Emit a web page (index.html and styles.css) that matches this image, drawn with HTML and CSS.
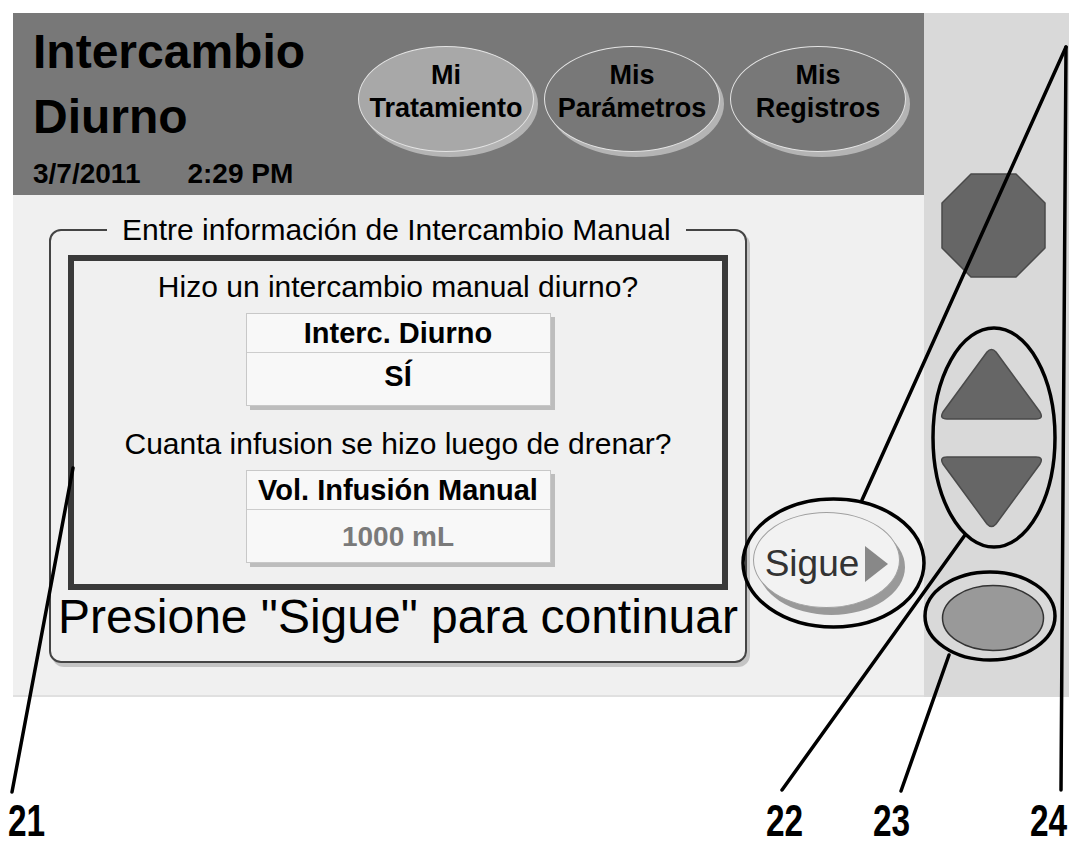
FILE: index.html
```html
<!DOCTYPE html>
<html lang="es">
<head>
    <meta charset="utf-8">
    <title>Intercambio Diurno</title>
    <link rel="stylesheet" href="styles.css">
</head>
<body>
    <div class="device">
        <div class="screen">
            <header class="topbar">
                <div class="title-block">
                    <h1 class="title">Intercambio<br>Diurno</h1>
                    <div class="clock"><span>3/7/2011</span><span>2:29 PM</span></div>
                </div>
                <nav class="tabs">
                    <div class="tab active">Mi<br>Tratamiento</div>
                    <div class="tab">Mis<br>Parámetros</div>
                    <div class="tab">Mis<br>Registros</div>
                </nav>
            </header>

            <main class="content">
                <fieldset class="entry">
                    <legend>Entre información de Intercambio Manual</legend>
                    <div class="entry-box">
                        <p class="question">Hizo un intercambio manual diurno?</p>
                        <div class="field">
                            <div class="field-label">Interc. Diurno</div>
                            <div class="field-value">SÍ</div>
                        </div>
                        <p class="question second">Cuanta infusion se hizo luego de drenar?</p>
                        <div class="field">
                            <div class="field-label">Vol. Infusión Manual</div>
                            <div class="field-value muted">1000 mL</div>
                        </div>
                    </div>
                    <p class="prompt">Presione "Sigue" para continuar</p>
                </fieldset>

                <div class="next">Sigue<span class="next-arrow"></span></div>
            </main>
        </div>

        <aside class="keys">
            <!-- stop key -->
            <svg class="key-stop" width="105" height="105" viewBox="0 0 105 105">
                <polygon points="30,1 75,1 104,30 104,75 75,104 30,104 1,75 1,30" fill="#666" stroke="#4a4a4a" stroke-width="1.5" stroke-linejoin="round"/>
            </svg>
            <div class="key-arrows">
                <svg width="107" height="75" viewBox="-2 -2 107 75">
                    <path d="M47 4 Q51.5 -1 56 4 L100 64 Q104 71 96 71 L7 71 Q-1 71 3 64 Z" fill="#666" stroke="#4a4a4a" stroke-width="1.5"/>
                </svg>
                <svg width="107" height="75" viewBox="-2 -2 107 75">
                    <path d="M47 67 Q51.5 72 56 67 L100 7 Q104 0 96 0 L7 0 Q-1 0 3 7 Z" fill="#666" stroke="#4a4a4a" stroke-width="1.5"/>
                </svg>
            </div>
            <svg class="key-ok" width="104" height="68" viewBox="0 0 104 68">
                <ellipse cx="52" cy="34" rx="50.5" ry="32.5" fill="#999" stroke="#333" stroke-width="1.5"/>
            </svg>
        </aside>
    </div>

    <div class="labels">
        <span class="label label-21">21</span>
        <span class="label label-22">22</span>
        <span class="label label-23">23</span>
        <span class="label label-24">24</span>
    </div>

    <!-- callout lines of the figure -->
    <svg class="callouts" width="1069" height="846" viewBox="0 0 1069 846">
        <g fill="none" stroke="#000" stroke-width="3.5" stroke-linecap="round">
            <ellipse cx="833.5" cy="563" rx="90.5" ry="64"/>
            <ellipse cx="994" cy="437.5" rx="61" ry="109.5"/>
            <ellipse cx="990" cy="616" rx="65" ry="44"/>
            <line x1="73" y1="468" x2="12" y2="792"/>
            <line x1="965" y1="535" x2="782" y2="790"/>
            <line x1="949" y1="655" x2="901" y2="791"/>
            <line x1="862" y1="500" x2="1066" y2="47"/>
            <line x1="1066" y1="47" x2="1061" y2="790"/>
        </g>
    </svg>
</body>
</html>
```

FILE: styles.css
```css
body {
    margin: 0;
    background: #fff;
    font-family: "Liberation Sans", Arial, sans-serif;
    color: #000;
    overflow: hidden;
}
.device {
    display: flex;
    margin: 13px 0 0 13px;
    height: 684px;
}
.screen {
    width: 911px;
    display: flex;
    flex-direction: column;
}

/* top bar */
.topbar {
    height: 182px;
    background: #787878;
    display: flex;
}
.title-block {
    width: 325px;
    padding: 6px 0 0 20px;
}
.title {
    margin: 0;
    font-size: 48px;
    line-height: 65px;
    font-weight: bold;
}
.clock {
    margin-top: 8px;
    font-size: 28px;
    line-height: 34px;
    font-weight: bold;
    display: flex;
    gap: 47px;
}
.tabs {
    display: flex;
    gap: 10px;
    padding-top: 33px;
}
.tab {
    width: 176px;
    height: 106px;
    box-sizing: border-box;
    border-radius: 50%;
    border: 1px solid #e4e4e4;
    background: #787878;
    box-shadow: 4px 5px 0 #b4b4b4;
    padding-top: 12px;
    text-align: center;
    font-size: 27px;
    line-height: 33px;
    font-weight: bold;
}
.tab.active {
    background: #a8a8a8;
}

/* entry area */
.content {
    flex: 1;
    background: #f0f0f0;
    border-bottom: 2px solid #e0e0e0;
    display: flex;
    align-items: flex-start;
}
.entry {
    margin: 19px 0 0 36px;
    padding: 0 17px 18px;
    width: 660px;
    min-width: 0;
    border: 2px solid #444;
    border-radius: 12px;
    box-shadow: 3px 4px 0 #c4c4c4;
}
.entry legend {
    margin-left: 39px;
    padding: 0 15px;
    font-size: 30px;
    line-height: 32px;
}
.entry-box {
    margin-top: 9px;
    border: 6px solid #3a3a3a;
    padding: 8px 0 21px;
    text-align: center;
}
.question {
    margin: 0;
    font-size: 30px;
    line-height: 36px;
}
.question.second {
    margin-top: 20px;
}
.field {
    width: 303px;
    margin: 8px auto 0;
    border: 1px solid #c8c8c8;
    background: #f8f8f8;
    box-shadow: 4px 4px 0 #bdbdbd;
    font-weight: bold;
    font-size: 29px;
}
.field-label {
    height: 38px;
    line-height: 38px;
    border-bottom: 1px solid #cdcdcd;
}
.field-value {
    height: 52px;
    line-height: 46px;
}
.field-value.muted {
    color: #7a7a7a;
    font-size: 28px;
    line-height: 54px;
}
.prompt {
    margin: 1px -20px 0;
    font-size: 48px;
    line-height: 52px;
    white-space: nowrap;
    text-align: center;
}

/* next button */
.next {
    margin: 317px 0 0 6px;
    width: 147px;
    height: 96px;
    box-sizing: border-box;
    padding-top: 8px;
    border-radius: 50%;
    border: 1px solid #a0a0a0;
    background: #f2f2f2;
    box-shadow: 5px 7px 0 #999;
    display: flex;
    align-items: center;
    justify-content: center;
    gap: 6px;
    font-size: 37px;
    color: #333;
}
.next-arrow {
    width: 0;
    height: 0;
    border-left: 23px solid #888;
    border-top: 18px solid transparent;
    border-bottom: 18px solid transparent;
}

/* hardware keys */
.keys {
    flex: 1;
    background: #d9d9d9;
    padding: 160px 0 0 17px;
    display: flex;
    flex-direction: column;
    align-items: flex-start;
}
.keys svg {
    display: block;
}
.key-arrows {
    margin: 68px 0 0 -3px;
    display: flex;
    flex-direction: column;
    gap: 34px;
}
.key-ok {
    margin-top: 54px;
}

/* figure labels */
.labels {
    display: flex;
    margin-top: 107px;
    height: 34px;
    font-weight: bold;
    font-size: 44px;
    line-height: 34px;
}
.label {
    display: inline-block;
    margin-right: -12px;
    transform: scaleX(0.76);
    transform-origin: left center;
}
.label-21 { margin-left: 8px; }
.label-22 { margin-left: 721px; }
.label-23 { margin-left: 70px; }
.label-24 { margin-left: 120px; }

.callouts {
    position: absolute;
    top: 0;
    left: 0;
    pointer-events: none;
}
```
